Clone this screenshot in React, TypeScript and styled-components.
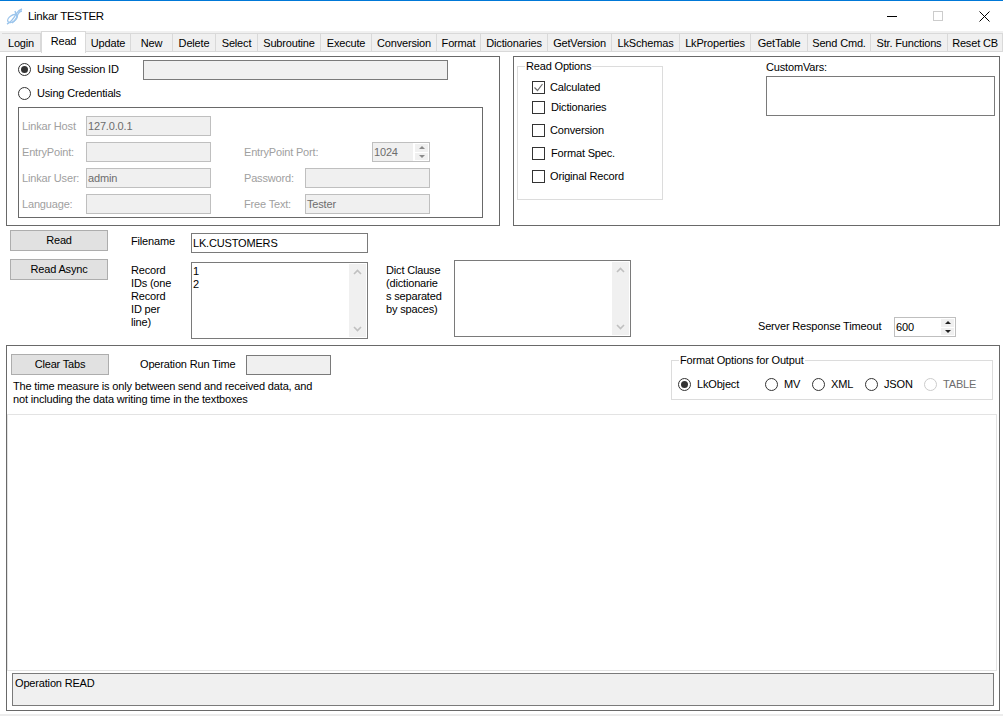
import React from "react";
import styled, { createGlobalStyle } from "styled-components";

const GlobalStyle = createGlobalStyle`
    html, body {
        margin: 0;
        padding: 0;
        background: #ffffff;
    }
    * {
        box-sizing: border-box;
    }
`
const Window = styled.div`
    width: 1003px;
    height: 717px;
    overflow: hidden;
    background: #ffffff;
    color: #000000;
    font-family: "Liberation Sans", Arial, sans-serif;
    font-size: 11px;
    letter-spacing: -0.17px;
    line-height: 13px;
    display: flex;
    flex-direction: column;
`
const TitleBar = styled.div`
    height: 31px;
    flex: none;
    border-top: 1px solid #0078d7;
    display: flex;
    align-items: center;
    padding-left: 6px;
`
const Title = styled.div`
    font-size: 11.5px;
    letter-spacing: -0.3px;
    margin-left: 5px;
    flex: 1;
`
const WinButtons = styled.div`
    display: flex;
    margin-right: -4px;
`
const WinButton = styled.div`
    width: 46px;
    height: 30px;
    display: flex;
    align-items: center;
    justify-content: center;
`
const TabStrip = styled.div`
    height: 21px;
    flex: none;
    background: #f0f0f0;
    border-bottom: 1px solid #d9d9d9;
    padding-left: 2px;
    display: flex;
    align-items: flex-end;
`
const Tab = styled.div<{ $w: number; $active?: boolean }>`
    width: ${(p) => p.$w}px;
    height: ${(p) => (p.$active ? "22px" : "19px")};
    margin-bottom: ${(p) => (p.$active ? "-2px" : "-1px")};
    background: ${(p) => (p.$active ? "#ffffff" : "#f0f0f0")};
    border: 1px solid #d9d9d9;
    border-left: ${(p) => (p.$active ? "1px solid #d9d9d9" : "none")};
    border-bottom: ${(p) => (p.$active ? "none" : "1px solid #d9d9d9")};
    padding: ${(p) => (p.$active ? "0 0 2px" : "1px 0 0")};
    display: flex;
    align-items: center;
    justify-content: center;
    white-space: nowrap;
    position: relative;
`
const TopRow = styled.div`
    display: flex;
    gap: 13px;
    margin: 4px 0 0 6px;
    height: 170px;
    flex: none;
`
const LeftPanel = styled.div`
    width: 494px;
    border: 1px solid #696969;
    padding: 3px 0 0 11px;
`
const SessionRow = styled.div`
    display: flex;
    align-items: center;
    height: 20px;
    margin-bottom: 3px;
`
const RadioCol = styled.div`
    width: 125px;
    margin-top: -1px;
`
const Option = styled.div`
    display: flex;
    align-items: center;
    gap: 6px;
    white-space: nowrap;
`
const Radio = styled.span<{ $checked?: boolean; $disabled?: boolean }>`
    width: 13px;
    height: 13px;
    flex: none;
    border-radius: 50%;
    border: 1px solid ${(p) => (p.$disabled ? "#cccccc" : "#333333")};
    background: #ffffff;
    display: flex;
    align-items: center;
    justify-content: center;
    &::after {
        content: "";
        display: ${(p) => (p.$checked ? "block" : "none")};
        width: 7px;
        height: 7px;
        border-radius: 50%;
        background: #333333;
    }
`
const Field = styled.div<{ $w: number; $h?: number; $white?: boolean; $dark?: boolean }>`
    width: ${(p) => p.$w}px;
    height: ${(p) => p.$h ?? 20}px;
    flex: none;
    background: ${(p) => (p.$white ? "#ffffff" : "#f0f0f0")};
    border: 1px solid ${(p) => (p.$dark ? "#7a7a7a" : "#bfbfbf")};
    color: ${(p) => (p.$white ? "#000000" : "#6d6d6d")};
    padding: 0 1px;
    display: flex;
    align-items: center;
    position: relative;
`
const CredBox = styled.div`
    width: 465px;
    height: 111px;
    margin-top: 4px;
    border: 1px solid #696969;
    padding: 8px 0 0 3px;
    display: grid;
    grid-template-columns: 64px 125px 94px 125px;
    grid-auto-rows: 20px;
    row-gap: 6px;
    align-items: center;
    color: #a0a0a0;
`
const LeftLabel = styled.div`
    grid-column: 1;
    white-space: nowrap;
`
const RightLabel = styled.div`
    grid-column: 3;
    padding-left: 33px;
    white-space: nowrap;
`
const PortField = styled(Field)`
    grid-column: 4;
    margin-left: 67px;
`
const SpinBox = styled.div`
    position: absolute;
    top: 0;
    right: 0;
    bottom: 0;
    width: 16px;
    display: flex;
    flex-direction: column;
    gap: 1px;
    padding: 1px 1px 1px 2px;
    background: #ffffff;
`
const SpinPart = styled.div<{ $down?: boolean; $dim?: boolean }>`
    flex: 1;
    background: #f0f0f0;
    display: flex;
    align-items: center;
    justify-content: center;
    &::after {
        content: "";
        border-left: 3px solid transparent;
        border-right: 3px solid transparent;
        border-${(p) => (p.$down ? "top" : "bottom")}: 3px solid ${(p) => (p.$dim ? "#8a8a8a" : "#222222")};
    }
`
const RightPanel = styled.div`
    width: 487px;
    border: 1px solid #696969;
    padding-left: 3px;
    display: flex;
`
const Group = styled.fieldset<{ $w: number; $h: number }>`
    width: ${(p) => p.$w}px;
    height: ${(p) => p.$h}px;
    flex: none;
    margin: 2px 0 0;
    border: 1px solid #dcdcdc;
    padding: 0;
    min-width: 0;
`
const Legend = styled.legend`
    margin-left: 7px;
    padding: 0 1px;
    line-height: 14px;
`
const CheckList = styled.div`
    padding: 8px 0 0 14px;
    display: flex;
    flex-direction: column;
`
const CheckRow = styled.div<{ $top: number; $nudge?: boolean }>`
    height: 13px;
    margin-top: ${(p) => p.$top}px;
    display: flex;
    align-items: center;
    gap: ${(p) => (p.$nudge ? 6 : 5)}px;
    white-space: nowrap;
`
const Check = styled.span`
    width: 13px;
    height: 13px;
    flex: none;
    border: 1px solid #333333;
    background: #ffffff;
    display: flex;
`
const CustomCol = styled.div`
    margin: 3px 0 0 103px;
    width: 229px;
`
const CustomLabel = styled.div`
    height: 16px;
    line-height: 14px;
`
const Middle = styled.div`
    height: 119px;
    flex: none;
    padding: 4px 0 8px 10px;
    display: flex;
`
const ButtonCol = styled.div`
    width: 98px;
    display: flex;
    flex-direction: column;
    gap: 8px;
`
const Button = styled.div`
    width: 98px;
    height: 21px;
    flex: none;
    background: #e1e1e1;
    border: 1px solid #adadad;
    display: flex;
    align-items: center;
    justify-content: center;
`
const FileCol = styled.div`
    margin: 3px 0 0 23px;
    display: grid;
    grid-template-columns: 60px 177px;
    grid-template-rows: 20px 77px;
    row-gap: 9px;
`
const FileLabel = styled.div`
    padding-top: 2px;
`
const RecordLabel = styled.div`
    padding-top: 2px;
`
const Memo = styled.div<{ $w: number }>`
    width: ${(p) => p.$w}px;
    height: 77px;
    border: 1px solid #7a7a7a;
    padding: 2px 1px;
    display: flex;
    justify-content: space-between;
    background: #ffffff;
`
const ScrollBar = styled.div`
    width: 17px;
    margin: -1px 0 -1px 0;
    background: #f0f0f0;
    display: flex;
    flex-direction: column;
    justify-content: space-between;
    align-items: center;
    padding: 5px 0;
`
const DictCol = styled.div`
    margin: 30px 0 0 18px;
    display: flex;
    height: 77px;
`
const DictLabel = styled.div`
    width: 68px;
    padding-top: 4px;
`
const TimeoutRow = styled.div`
    margin-left: 127px;
    align-self: flex-end;
    display: flex;
    align-items: center;
`
const TimeoutLabel = styled.div`
    width: 136px;
    padding-bottom: 2px;
    white-space: nowrap;
`
const BottomPanel = styled.div`
    width: 994px;
    height: 366px;
    flex: none;
    margin-left: 6px;
    border: 1px solid #696969;
    display: flex;
    flex-direction: column;
`
const Head = styled.div`
    height: 68px;
    flex: none;
    display: flex;
    justify-content: space-between;
`
const HeadLeft = styled.div`
    padding: 8px 0 0 4px;
`
const ClearRow = styled.div`
    display: flex;
    align-items: flex-start;
`
const RunLabel = styled.div`
    width: 106px;
    margin-left: 31px;
    line-height: 21px;
    white-space: nowrap;
`
const RunField = styled(Field)`
    margin-top: 1px;
`
const Note = styled.div`
    margin: 5px 0 0 2px;
`
const FormatGroup = styled(Group)`
    margin: 7px 6px 0 0;
`
const FormatGrid = styled.div`
    display: grid;
    grid-template-columns: 87px 47px 53px 59px auto;
    padding: 11px 0 0 6px;
`
const MutedOption = styled(Option)`
    color: #6d6d6d;
`
const Output = styled.div`
    width: 990px;
    height: 257px;
    flex: none;
    border: 1px solid #e3e3e3;
    background: #ffffff;
`
const Status = styled.div`
    width: 982px;
    height: 33px;
    flex: none;
    margin: 2px 0 0 5px;
    background: #f0f0f0;
    border: 1px solid #7a7a7a;
    padding: 3px 2px;
`
const BottomLine = styled.div`
    height: 2px;
    flex: none;
    margin-top: 3px;
    background: #ececec;
`

const tabs: [string, number][] = [
    ["Login", 39], ["Read", 45], ["Update", 45], ["New", 42], ["Delete", 43], ["Select", 42],
    ["Subroutine", 63], ["Execute", 51], ["Conversion", 65], ["Format", 44], ["Dictionaries", 67],
    ["GetVersion", 64], ["LkSchemas", 68], ["LkProperties", 71], ["GetTable", 57], ["Send Cmd.", 63],
    ["Str. Functions", 77], ["Reset CB", 55],
]

function Chevron({ up }: { up?: boolean }) {
    return (
        <svg width="9" height="6" viewBox="0 0 9 6" fill="none" stroke="#c0c0c0" strokeWidth="1.6">
            <path d={up ? "M1 5 L4.5 1.5 L8 5" : "M1 1 L4.5 4.5 L8 1"} />
        </svg>
    )
}

function Logo() {
    return (
        <svg width="17" height="17" viewBox="0 0 17 17" fill="none" stroke="#9cc5ec" strokeWidth="1.4">
            <ellipse cx="6.5" cy="10.5" rx="5.5" ry="3" transform="rotate(-35 6.5 10.5)" />
            <path d="M1 16 C 5 14, 8 10, 10 6 C 11 4, 13 2, 16 1" />
            <path d="M6 15 C 9 13, 11 9, 12 6 C 13 4, 14 3, 16 3" />
            <path d="M9 3 L11 9" />
        </svg>
    )
}

function App() {
    return (
        <Window>
            <GlobalStyle />
            <TitleBar>
                <Logo />
                <Title>Linkar TESTER</Title>
                <WinButtons>
                    <WinButton>
                        <svg width="10" height="1"><rect width="10" height="1" fill="#000000" /></svg>
                    </WinButton>
                    <WinButton>
                        <svg width="10" height="10"><rect x="0.5" y="0.5" width="9" height="9" fill="none" stroke="#cccccc" /></svg>
                    </WinButton>
                    <WinButton>
                        <svg width="11" height="11" stroke="#000000"><path d="M0.5 0.5 L10.5 10.5 M10.5 0.5 L0.5 10.5" /></svg>
                    </WinButton>
                </WinButtons>
            </TitleBar>
            <TabStrip>
                {tabs.map(([name, w]) => (
                    <Tab key={name} $w={w} $active={name === "Read"}>{name}</Tab>
                ))}
            </TabStrip>
            <TopRow>
                <LeftPanel>
                    <SessionRow>
                        <RadioCol>
                            <Option><Radio $checked />Using Session ID</Option>
                        </RadioCol>
                        <Field $w={305} $dark />
                    </SessionRow>
                    <SessionRow>
                        <Option><Radio />Using Credentials</Option>
                    </SessionRow>
                    <CredBox>
                        <LeftLabel>Linkar Host</LeftLabel>
                        <Field $w={125}>127.0.0.1</Field>
                        <LeftLabel>EntryPoint:</LeftLabel>
                        <Field $w={125} />
                        <RightLabel>EntryPoint Port:</RightLabel>
                        <PortField $w={58}>
                            1024
                            <SpinBox>
                                <SpinPart $dim />
                                <SpinPart $down $dim />
                            </SpinBox>
                        </PortField>
                        <LeftLabel>Linkar User:</LeftLabel>
                        <Field $w={125}>admin</Field>
                        <RightLabel>Password:</RightLabel>
                        <Field $w={125} />
                        <LeftLabel>Language:</LeftLabel>
                        <Field $w={125} />
                        <RightLabel>Free Text:</RightLabel>
                        <Field $w={125}>Tester</Field>
                    </CredBox>
                </LeftPanel>
                <RightPanel>
                    <Group $w={146} $h={141}>
                        <Legend>Read Options</Legend>
                        <CheckList>
                            <CheckRow $top={0}>
                                <Check>
                                    <svg width="11" height="11" fill="none" stroke="#6d6d6d" strokeWidth="1.2">
                                        <path d="M1.5 5.5 L4.5 8.5 L9.5 2" />
                                    </svg>
                                </Check>
                                Calculated
                            </CheckRow>
                            <CheckRow $top={7} $nudge><Check />Dictionaries</CheckRow>
                            <CheckRow $top={10}><Check />Conversion</CheckRow>
                            <CheckRow $top={10} $nudge><Check />Format Spec.</CheckRow>
                            <CheckRow $top={10}><Check />Original Record</CheckRow>
                        </CheckList>
                    </Group>
                    <CustomCol>
                        <CustomLabel>CustomVars:</CustomLabel>
                        <Field $w={229} $h={40} $white $dark />
                    </CustomCol>
                </RightPanel>
            </TopRow>
            <Middle>
                <ButtonCol>
                    <Button>Read</Button>
                    <Button>Read Async</Button>
                </ButtonCol>
                <FileCol>
                    <FileLabel>Filename</FileLabel>
                    <Field $w={177} $white $dark>LK.CUSTOMERS</Field>
                    <RecordLabel>Record<br />IDs (one<br />Record<br />ID per<br />line)</RecordLabel>
                    <Memo $w={177}>
                        <div>1<br />2</div>
                        <ScrollBar><Chevron up /><Chevron /></ScrollBar>
                    </Memo>
                </FileCol>
                <DictCol>
                    <DictLabel>Dict Clause<br />(dictionarie<br />s separated<br />by spaces)</DictLabel>
                    <Memo $w={177}>
                        <div />
                        <ScrollBar><Chevron up /><Chevron /></ScrollBar>
                    </Memo>
                </DictCol>
                <TimeoutRow>
                    <TimeoutLabel>Server Response Timeout</TimeoutLabel>
                    <Field $w={62} $white>
                        600
                        <SpinBox>
                            <SpinPart />
                            <SpinPart $down />
                        </SpinBox>
                    </Field>
                </TimeoutRow>
            </Middle>
            <BottomPanel>
                <Head>
                    <HeadLeft>
                        <ClearRow>
                            <Button>Clear Tabs</Button>
                            <RunLabel>Operation Run Time</RunLabel>
                            <RunField $w={85} $dark />
                        </ClearRow>
                        <Note>
                            The time measure is only between send and received data, and<br />
                            not including the data writing time in the textboxes
                        </Note>
                    </HeadLeft>
                    <FormatGroup $w={322} $h={47}>
                        <Legend>Format Options for Output</Legend>
                        <FormatGrid>
                            <Option><Radio $checked />LkObject</Option>
                            <Option><Radio />MV</Option>
                            <Option><Radio />XML</Option>
                            <Option><Radio />JSON</Option>
                            <MutedOption><Radio $disabled />TABLE</MutedOption>
                        </FormatGrid>
                    </FormatGroup>
                </Head>
                <Output />
                <Status>Operation READ</Status>
            </BottomPanel>
            <BottomLine />
        </Window>
    )
}

export default App;
